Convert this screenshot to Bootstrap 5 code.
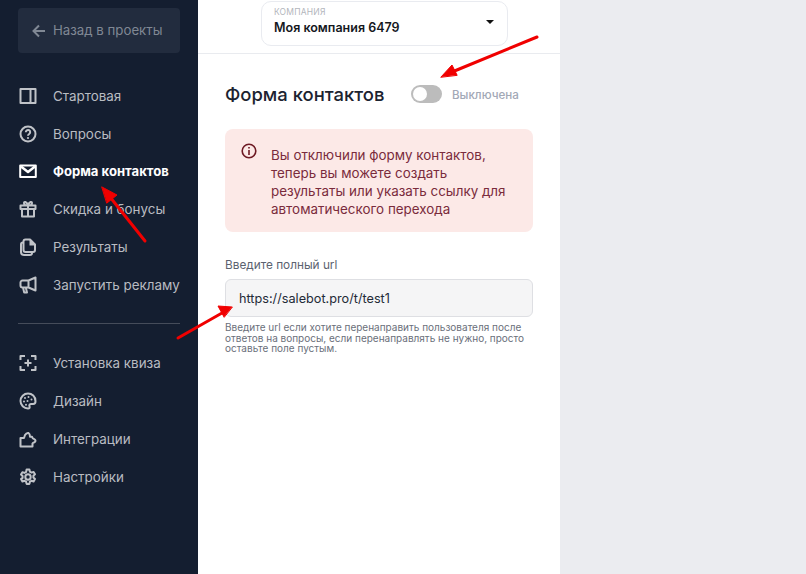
<!doctype html>
<html lang="ru"><head><meta charset="utf-8"><title>Форма контактов</title>
<link rel="stylesheet" href="https://cdn.jsdelivr.net/npm/bootstrap@5.3.0/dist/css/bootstrap.min.css">
<style>
html,body{height:100%;margin:0;overflow:hidden}
body{font-family:Inter,"Noto Sans",sans-serif;background:#ebecf0;position:relative;width:806px;height:574px}
.shell{height:574px}
.side{width:198px;background:#141e30;padding:8px 18px 0}
.backbtn{height:45px;background:#222c3e;border-radius:4px;color:#808894;font-size:13.25px;padding-left:14px;gap:7px}
.menu{margin-top:24px}
.mitem{height:37.8px;color:#b9bcc2;font-size:13.4px;gap:16px;padding-left:1px}
.mitem.low{height:38px}
.mitem svg{width:18px;height:18px;flex:none;fill:none;stroke:#c0c3c8;stroke-width:2;stroke-linejoin:round}
.mitem svg .dot{fill:#c0c3c8;stroke:none}
.mitem.on{color:#fff;font-weight:700;font-size:13.1px}
.mitem.on svg{stroke:#fff}
.sep{border-top:1px solid #454c5a;margin:19px 0 20px}
.pane{width:362px;background:#fff}
.top{height:54px;border-bottom:1px solid #e9ebef;padding:1px 0 0 63px}
.company-box{width:247px;height:45px;border:1px solid #e9ebf0;border-radius:10px;padding:4px 13px 4px 12px;background:#fff}
.clabel{font-size:8.5px;color:#b3b6bc;line-height:12px;letter-spacing:.2px}
.cname{font-size:12.5px;font-weight:600;color:#15181e;line-height:18px;margin-top:1px}
.caret{width:0;height:0;border-left:4px solid transparent;border-right:4px solid transparent;border-top:4px solid #111;align-self:center;margin-top:-4px}
.body-pad{padding:0 27px}
.headline{margin-top:25px;height:30px}
.headline h1{font-size:18.45px;font-weight:500;color:#1c2330;margin:0;width:186px}
.tog{width:31px;height:18px;background:#bcbcbc;border-radius:9px;padding:2px;margin-right:10px}
.tog span{display:block;width:14px;height:14px;background:#fff;border-radius:50%}
.state{font-size:11.6px;font-weight:500;color:#a2a8b6;margin-top:3px}
.warn{margin-top:20px;background:#fce9e7;border-radius:8px;width:308px;height:103px;padding:17px 16px;gap:14px;color:#7a2b3c;font-size:13.4px;line-height:18px}
.warn svg{width:16px;height:16px;flex:none;margin-top:-3px}
.warn p{margin:0}
.lab{font-size:11.8px;color:#5b6270;margin:26px 0 7px;line-height:14px}
.field{width:308px;height:38px;background:#f5f5f6;border:1px solid #dedfe3;border-radius:6px;padding:0 13px;font-size:12.7px;color:#232a36;box-shadow:none}
.hint{font-size:10px;line-height:10.5px;color:#6a6f7a;margin:5px 0 0;width:308px}
.rest{flex:1}
.arrows{position:absolute;left:0;top:0;width:806px;height:574px;pointer-events:none}
</style></head><body>
<div class="shell d-flex">
<aside class="side d-flex flex-column">
<div class="backbtn d-flex align-items-center"><svg width="14" height="14" viewBox="0 0 14 14" fill="none" stroke="#808894" stroke-width="2"><path d="M13 7H2M7 1.500 1.500 7 7 12.500"/></svg><span>Назад в проекты</span></div>
<nav class="menu d-flex flex-column">
<div class="mitem d-flex align-items-center"><svg viewBox="0 0 18 18"><path d="M1.500 2h15v14h-15zM11.500 2v14"/></svg>Стартовая</div>
<div class="mitem d-flex align-items-center"><svg viewBox="0 0 18 18"><circle cx="9" cy="9" r="7.500"/><path d="M6.800 7.200a2.200 2.200 0 1 1 3.400 1.800c-.8.500-1.200 1-1.200 1.700"/><circle class="dot" cx="9" cy="13" r="1.100"/></svg>Вопросы</div>
<div class="mitem on d-flex align-items-center"><svg viewBox="0 0 18 18"><path d="M1.200 3.500h15.600v11.500H1.200z"/><path d="M2 4.500 9 10l7-5.500" stroke-width="2.500"/></svg>Форма контактов</div>
<div class="mitem d-flex align-items-center"><svg viewBox="0 0 18 18"><path d="M1.500 5.500h15v3.500h-15zM3 9v7.500h12V9M9 5.500v11M9 5.500C7 5.500 5 4.500 5 3s2.500-2 4 2.500C10.500 1 13 1.500 13 3s-2 2.500-4 2.500"/></svg>Скидка и бонусы</div>
<div class="mitem d-flex align-items-center"><svg viewBox="0 0 18 18"><path d="M6.500 1.500H11l5 5V12a2 2 0 0 1-2 2H6.500a2 2 0 0 1-2-2V3.500a2 2 0 0 1 2-2z"/><path class="dot" d="M10.500 1.500h1l5 5v1h-6z"/><path d="M4.500 4.500H4A2 2 0 0 0 2 6.500V14a3 3 0 0 0 3 3h6a2 2 0 0 0 2-2v-1"/></svg>Результаты</div>
<div class="mitem d-flex align-items-center"><svg viewBox="0 0 18 18"><path d="M16.500 1.500v13L9.500 11.500H3.500a2 2 0 0 1-2-2v-3a2 2 0 0 1 2-2h6zM9.500 4.500v7M4 11.500l1.200 5h2.800l-1.200-5"/></svg>Запустить рекламу</div>
<div class="sep"></div>
<div class="mitem low d-flex align-items-center"><svg viewBox="0 0 18 18"><path d="M1.500 6V2h4.500M12 2h4.500v4M16.500 12v4H12M6 16H1.500v-4M9 5.500v7M5.500 9h7"/></svg>Установка квиза</div>
<div class="mitem low d-flex align-items-center"><svg viewBox="0 0 18 18"><path d="M9 1.500A7.500 7.500 0 1 0 9 16.500c1.500 0 2-1 1.500-2.200-.6-1.400.3-2.300 1.700-2.300h2c1.400 0 2.300-1 2.300-2.800C16.500 4.500 13 1.500 9 1.500z"/><circle class="dot" cx="6" cy="6" r="1"/><circle class="dot" cx="9.500" cy="5" r="1"/><circle class="dot" cx="5" cy="9.500" r="1"/><circle class="dot" cx="8.500" cy="9" r="1"/><circle class="dot" cx="7" cy="12.700" r="1"/><circle class="dot" cx="12.500" cy="7.500" r="1"/></svg>Дизайн</div>
<div class="mitem low d-flex align-items-center"><svg viewBox="0 0 18 18"><path d="M1.500 16.500V8H5l1-3Q7.500 2.500 9.500 3 11 4 11 6.800h2Q13.500 9 15.500 9.300 17.500 10.500 15.500 12.200 14 12.500 13.500 13.500v3z"/></svg>Интеграции</div>
<div class="mitem low d-flex align-items-center"><svg viewBox="0 0 18 18"><circle cx="9" cy="9" r="2.700"/><path d="M7.600 1.500h2.800l.5 2.200 1.600.9 2.100-.7 1.400 2.400-1.600 1.500v1.800l1.600 1.500-1.400 2.400-2.100-.7-1.600.9-.5 2.200H7.600l-.5-2.200-1.600-.9-2.100.7-1.400-2.400L3.600 9.900V8.100L2 6.600l1.400-2.400 2.100.7 1.600-.9z"/></svg>Настройки</div>
</nav>
</aside>
<main class="pane">
<div class="top"><div class="company-box d-flex justify-content-between align-items-start"><div><div class="clabel">КОМПАНИЯ</div><div class="cname">Моя компания 6479</div></div><span class="caret"></span></div></div>
<div class="body-pad">
<div class="headline d-flex align-items-center"><h1>Форма контактов</h1><div class="tog"><span></span></div><span class="state">Выключена</span></div>
<div class="warn d-flex"><svg viewBox="0 0 16 16" fill="none" stroke="#6e1a24" stroke-width="1.600"><circle cx="8" cy="8" r="6.800"/><path d="M8 4v1.400M8 7v5"/></svg><p>Вы отключили форму контактов, теперь вы можете создать результаты или указать ссылку для автоматического перехода</p></div>
<div class="lab">Введите полный url</div>
<input class="form-control field" value="https://salebot.pro/t/test1" readonly>
<p class="hint">Введите url если хотите перенаправить пользователя после ответов на вопросы, если перенаправлять не нужно, просто оставьте поле пустым.</p>
</div>
</main>
<div class="rest"></div>
</div>
<svg class="arrows" viewBox="0 0 806 574" aria-hidden="true"><g stroke="#f00000" stroke-width="3" fill="#f00000" stroke-linecap="round"><path d="M145 241 110 197"/><path d="M102 187 117 195 107 203z" stroke-width="1"/><path d="M537 37 452 72"/><path d="M441 77 452 65 457 75z" stroke-width="1"/><path d="M178 338 222 313"/><path d="M232 307 218 306 224 317z" stroke-width="1"/></g></svg>
</body></html>
